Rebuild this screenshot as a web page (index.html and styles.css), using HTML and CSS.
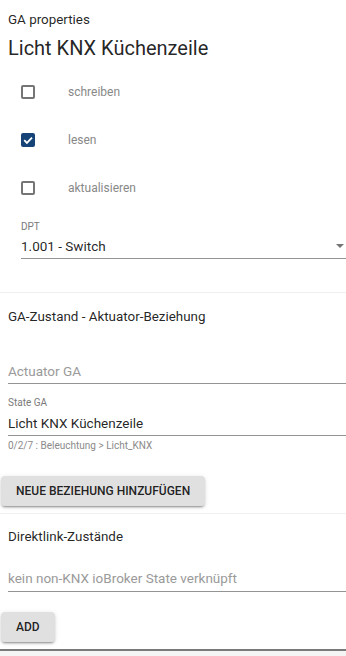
FILE: index.html
```html
<!DOCTYPE html>
<html lang="de">
<head>
<meta charset="utf-8">
<link rel="stylesheet" href="styles.css">
</head>
<body>
<div class="page">
  <section class="sec">
    <div class="subtitle">GA properties</div>
    <div class="title">Licht KNX Küchenzeile</div>
    <div class="checks">
      <div class="check-row">
        <span class="box"></span>
        <span class="check-label">schreiben</span>
      </div>
      <div class="check-row">
        <span class="box checked">
          <svg viewBox="0 0 14 14" width="14" height="14"><path d="M3.2 7.2 L5.9 9.9 L11 4.6" fill="none" stroke="#fff" stroke-width="1.8"/></svg>
        </span>
        <span class="check-label">lesen</span>
      </div>
      <div class="check-row">
        <span class="box"></span>
        <span class="check-label">aktualisieren</span>
      </div>
    </div>
    <div class="field select-field">
      <div class="field-label">DPT</div>
      <div class="field-value select-value">
        <span>1.001 - Switch</span>
        <svg class="arrow" viewBox="0 0 8 4" width="8" height="4"><path d="M0 0 H8 L4 4 Z" fill="#757575"/></svg>
      </div>
    </div>
  </section>
  <hr class="divider first-divider">
  <section class="sec">
    <div class="section-title">GA-Zustand - Aktuator-Beziehung</div>
    <div class="input placeholder actuator">Actuator GA</div>
    <div class="field state-field">
      <div class="field-label">State GA</div>
      <div class="field-value">Licht KNX Küchenzeile</div>
      <div class="helper">0/2/7 : Beleuchtung &gt; Licht_KNX</div>
    </div>
    <button class="btn btn-new">NEUE BEZIEHUNG HINZUFÜGEN</button>
  </section>
  <hr class="divider second-divider">
  <section class="sec">
    <div class="section-title links-title">Direktlink-Zustände</div>
    <div class="input placeholder links-input">kein non-KNX ioBroker State verknüpft</div>
    <button class="btn btn-add">ADD</button>
  </section>
  <div class="bottom-bar"></div>
</div>
</body>
</html>
```
FILE: styles.css
```css
html, body {
  margin: 0;
  padding: 0;
}
html { background: #f5f5f5; }
body {
  background: #fff;
  font-family: Roboto, "Liberation Sans", sans-serif;
  color: rgba(0,0,0,0.87);
  width: 346px;
  overflow: hidden;
}
.page {
  display: flex;
  flex-direction: column;
}
.sec {
  padding-left: 8px;
  display: flex;
  flex-direction: column;
}
.subtitle {
  padding-top: 10px;
  font-size: 13.4px;
  line-height: 20px;
}
.title {
  margin-top: 4px;
  font-size: 20px;
  line-height: 28px;
}
.checks {
  margin-top: 6px;
  display: flex;
  flex-direction: column;
}
.check-row {
  height: 48px;
  display: flex;
  align-items: center;
}
.box {
  box-sizing: border-box;
  width: 14px;
  height: 14px;
  margin-left: 13px;
  border: 2px solid #757575;
  border-radius: 2px;
  display: flex;
  align-items: center;
  justify-content: center;
}
.box.checked {
  border: none;
  background: #164477;
}
.box svg { display: block; }
.check-label {
  margin-left: 33px;
  font-size: 12px;
  line-height: 16px;
  color: #888;
}
.field-label {
  font-size: 10px;
  line-height: 12px;
  color: #7a7a7a;
}
.field-value {
  font-size: 13.5px;
  line-height: 20px;
  padding-bottom: 2px;
  border-bottom: 1px solid #949494;
}
.select-field {
  margin-left: 13px;
  margin-top: 9px;
}
.select-field .field-value {
  margin-top: 3px;
}
.select-value {
  display: flex;
  justify-content: space-between;
  align-items: center;
}
.arrow {
  margin-right: 2px;
  display: block;
}
.divider {
  margin: 0;
  border: none;
  height: 1px;
  background: #f0f0f0;
}
.first-divider { margin-top: 33px; }
.section-title {
  margin-top: 14px;
  font-size: 13.4px;
  line-height: 20px;
}
.input {
  font-size: 13.5px;
  line-height: 20px;
  padding-bottom: 2px;
  border-bottom: 1px solid #949494;
}
.placeholder { color: #9a9a9a; }
.actuator { margin-top: 34px; }
.state-field { margin-top: 13px; }
.state-field .field-value { margin-top: 4px; }
.helper {
  margin-top: 4px;
  font-size: 10px;
  line-height: 12px;
  color: #8a8a8a;
}
.btn {
  align-self: flex-start;
  margin-left: -7px;
  height: 30px;
  padding: 0 15px;
  border: none;
  border-radius: 4px;
  background: #e0e0e0;
  font-family: Roboto, "Liberation Sans", sans-serif;
  font-size: 12px;
  font-weight: 500;
  color: rgba(0,0,0,0.87);
  box-shadow: 0 3px 1px -2px rgba(0,0,0,0.2), 0 2px 2px 0 rgba(0,0,0,0.14), 0 1px 5px 0 rgba(0,0,0,0.12);
}
.btn-new { margin-top: 24px; }
.second-divider { margin-top: 7px; }
.links-title { margin-top: 13px; }
.links-input { margin-top: 21px; padding-bottom: 3px; }
.btn-add { margin-top: 20px; }
.bottom-bar {
  margin-top: 7px;
  height: 2px;
  background: #7a7a7a;
}
```
